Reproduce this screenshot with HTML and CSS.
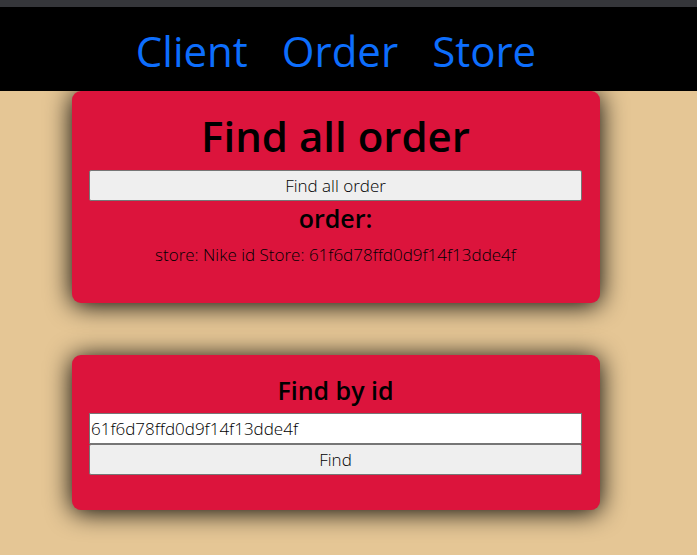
FILE: index.html
```html
<!DOCTYPE html>
<html lang="en">
<head>
  <meta charset="utf-8">
  <meta name="viewport" content="width=device-width, initial-scale=1">
  <title>Order</title>
  <link rel="stylesheet" href="styles.css">
</head>
<body>
  <header class="topbar">
    <nav class="nav">
      <a href="#client">Client</a>
      <a href="#order">Order</a>
      <a href="#store">Store</a>
    </nav>
  </header>
  <main class="content">
    <section class="card">
      <h1 class="title">Find all order</h1>
      <button class="control button" type="button">Find all order</button>
      <h2 class="subtitle">order:</h2>
      <p class="result">store: Nike id Store: 61f6d78ffd0d9f14f13dde4f</p>
    </section>
    <form class="card">
      <h2 class="subtitle"><label for="order-id">Find by id</label></h2>
      <input class="control field" id="order-id" type="text" value="61f6d78ffd0d9f14f13dde4f">
      <button class="control button" type="button">Find</button>
    </form>
  </main>
</body>
</html>
```
FILE: styles.css
```css
* {
  box-sizing: border-box;
}

body {
  margin: 0;
  min-height: 100vh;
  background: #e5c695;
  color: #000;
  font-family: "Segoe UI", "Open Sans", "Noto Sans", sans-serif;
  font-size: 17px;
  font-weight: 350;
  line-height: 27px;
}

.topbar {
  position: relative;
  z-index: 1;
  padding: 14px 25px 10px 0;
  border-top: 7px solid #35363a;
  background: #000;
}

.nav {
  display: flex;
  justify-content: center;
  gap: 34px;
  font-size: 42px;
  font-weight: 400;
  line-height: 60px;
}

.nav a {
  color: #0d6efd;
  text-decoration: none;
}

.content {
  display: flex;
  flex-direction: column;
  gap: 52px;
  padding: 0 97px 40px 72px;
}

.card {
  display: flex;
  flex-direction: column;
  padding: 18px 18px 35px 17px;
  border-radius: 9px;
  background: #dc143c;
  box-shadow: 0 2px 26px #000;
  text-align: center;
}

.title {
  margin: 0 0 8px;
  font-size: 42px;
  font-weight: 600;
  line-height: 53px;
}

.subtitle {
  margin: 0 0 6px;
  font-size: 25px;
  font-weight: 600;
  line-height: 34px;
}

.result {
  margin: 0;
}

.control {
  width: 100%;
  height: 31px;
  margin: 0;
  border: 1px solid #767676;
  color: #000;
  font: inherit;
}

.button {
  padding: 0 6px;
  border-radius: 2px;
  background: #efefef;
}

.field {
  padding: 0 1px;
  border-radius: 0;
  background: #fff;
}
```
